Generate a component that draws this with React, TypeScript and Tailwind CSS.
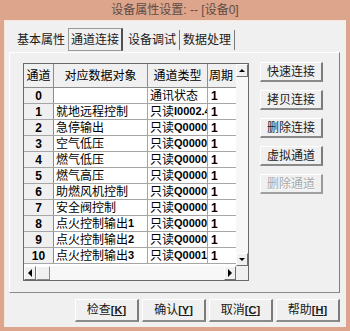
import React from "react";

const rows = [
  { id: "0", name: "", type: "通讯状态" },
  { id: "1", name: "就地远程控制", type: "只读I0002.4" },
  { id: "2", name: "急停输出", type: "只读Q0000" },
  { id: "3", name: "空气低压", type: "只读Q0000" },
  { id: "4", name: "燃气低压", type: "只读Q0000" },
  { id: "5", name: "燃气高压", type: "只读Q0000" },
  { id: "6", name: "助燃风机控制", type: "只读Q0000" },
  { id: "7", name: "安全阀控制", type: "只读Q0000" },
  { id: "8", name: "点火控制输出1", type: "只读Q0000" },
  { id: "9", name: "点火控制输出2", type: "只读Q0000" },
  { id: "10", name: "点火控制输出3", type: "只读Q0001" },
];

const sideButtons = ["快速连接", "拷贝连接", "删除连接", "虚拟通道"];

// latin runs look bold in the old bitmap font
function Mixed({ text }: { text: string }) {
  const parts = text.split(/([\x00-\x7f]+)/).filter(Boolean);
  return (
    <>
      {parts.map((p, i) =>
        /^[\x00-\x7f]+$/.test(p) ? (
          <span key={i} className="font-bold text-[11px]">{p}</span>
        ) : (
          <span key={i}>{p}</span>
        )
      )}
    </>
  );
}

function Arrow({ dir }: { dir: "up" | "down" | "left" | "right" }) {
  const pts = {
    up: "1,4 4,1 7,4",
    down: "1,1 4,4 7,1",
    left: "4,0 0,4 4,8",
    right: "0,0 4,4 0,8",
  }[dir];
  const size = dir === "up" || dir === "down" ? { w: 8, h: 5 } : { w: 5, h: 8 };
  return (
    <svg width={size.w} height={size.h} viewBox={`0 0 ${size.w} ${size.h}`}>
      <polygon points={pts} fill="#000" />
    </svg>
  );
}

function ScrollBtn({ dir, className = "" }: { dir: "up" | "down" | "left" | "right"; className?: string }) {
  return (
    <div
      className={`flex items-center justify-center bg-[#f0f0f0] border-t border-l border-t-white border-l-white border-r border-b border-r-[#6f6f6f] border-b-[#6f6f6f] ${className}`}
    >
      <Arrow dir={dir} />
    </div>
  );
}

function BottomButton({ label, hot }: { label: string; hot: string }) {
  return (
    <button className="w-[64px] h-[23px] bg-[#f0f0f0] border-t border-l border-t-white border-l-white border-r-2 border-b-2 border-r-[#7b7b7b] border-b-[#8a8a8a] text-[12px] text-[#1a1a1a] flex items-center justify-center">
      {label}
      <span className="font-bold text-[11px]">
        [<span className="underline">{hot}</span>]
      </span>
    </button>
  );
}

export default function App() {
  return (
    <div
      className="w-[350px] h-[331px] bg-[#dca58c] flex flex-col overflow-hidden"
      style={{ fontFamily: '"Liberation Sans", "Noto Sans CJK SC", sans-serif' }}
    >
      {/* title bar */}
      <div className="h-[20px] flex items-center justify-center text-[12px] text-[#5e4c45]">
        设备属性设置: -- [设备0]
      </div>

      <div className="flex-1 mx-[4px] mb-[4px] bg-[#f0f0f0] border-t border-l border-[#f8e6de] flex flex-col pl-[4px] pr-[6px] pt-[7px]">
        {/* tabs */}
        <div className="h-[24px] flex items-start text-[12px] text-[#1a1a1a]">
          <div className="w-[59px] h-[23px] pl-[8px] flex items-center">基本属性</div>
          <div className="w-[55px] h-[23px] flex items-center justify-center border border-[#9a9a9a] border-r-2 border-r-[#4f4f4f]">
            通道连接
          </div>
          <div className="w-[56px] h-[23px] pl-[5px] flex items-center">设备调试</div>
          <div className="w-[56px] h-[20px] mt-[2px] flex items-center justify-center border-l border-r border-[#7a7a7a]">
            数据处理
          </div>
        </div>

        {/* tab panel */}
        <div className="h-[241px] border-t border-l border-t-white border-l-white border-r border-b border-r-[#7f7f7f] border-b-[#8a8a8a] flex pl-[13px] pt-[10px]">
          {/* grid */}
          <div className="w-[226px] h-[218px] border border-[#6a6a6a] bg-white flex flex-col text-[12px] text-black">
            <div className="flex flex-1 min-h-0">
              <div className="w-[212px] overflow-hidden">
                <div className="flex h-[24px] bg-[#f0f0f0] border-b border-[#8c8c8c]">
                  <div className="w-[30px] shrink-0 border-r border-[#8c8c8c] flex items-center justify-center">通道</div>
                  <div className="w-[94px] shrink-0 border-r border-[#8c8c8c] flex items-center justify-center">对应数据对象</div>
                  <div className="w-[60px] shrink-0 border-r border-[#8c8c8c] flex items-center justify-center">通道类型</div>
                  <div className="w-[28px] shrink-0 flex items-center pl-[1px] whitespace-nowrap">周期</div>
                </div>
                {rows.map((r) => (
                  <div key={r.id} className="flex h-[16px] border-b border-[#a6a6a6]">
                    <div className="w-[30px] shrink-0 bg-[#f0f0f0] border-r border-[#8c8c8c] flex items-center justify-center font-bold">
                      {r.id}
                    </div>
                    <div className="w-[94px] shrink-0 border-r border-[#a6a6a6] flex items-center pl-[2px] whitespace-nowrap overflow-hidden">
                      <Mixed text={r.name} />
                    </div>
                    <div className="w-[60px] shrink-0 border-r border-[#a6a6a6] flex items-center pl-[2px] whitespace-nowrap overflow-hidden">
                      <Mixed text={r.type} />
                    </div>
                    <div className="w-[28px] shrink-0 flex items-center pl-[3px] font-bold">1</div>
                  </div>
                ))}
              </div>
              {/* vertical scrollbar */}
              <div className="w-[12px] flex flex-col bg-[#f7f7f7]">
                <ScrollBtn dir="up" className="h-[13px]" />
                <div className="flex-1" />
                <ScrollBtn dir="down" className="h-[13px]" />
              </div>
            </div>
            {/* horizontal scrollbar */}
            <div className="h-[14px] flex bg-[#f7f7f7]">
              <ScrollBtn dir="left" className="w-[12px]" />
              <div className="w-[14px] border-t border-l border-t-white border-l-white border-r border-b border-r-[#8a8a8a] border-b-[#8a8a8a] bg-[#f0f0f0]" />
              <div className="flex-1" />
              <ScrollBtn dir="right" className="w-[12px]" />
              <div className="w-[12px] bg-[#f0f0f0]" />
            </div>
          </div>

          {/* side buttons */}
          <div className="ml-[11px] flex flex-col gap-[8px] -mt-[1px]">
            {sideButtons.map((b) => (
              <button
                key={b}
                className="w-[63px] h-[20px] bg-[#f0f0f0] border-t border-l border-t-white border-l-white border-r-2 border-b-2 border-r-[#7b7b7b] border-b-[#8a8a8a] text-[12px] text-[#1a1a1a] flex items-center justify-center"
              >
                {b}
              </button>
            ))}
            <button className="w-[63px] h-[20px] bg-[#f0f0f0] border-t border-l border-t-white border-l-white border-r-2 border-b-2 border-r-[#9a9a9a] border-b-[#a0a0a0] text-[12px] text-[#a8a8a8] [text-shadow:1px_1px_0_#ffffff] flex items-center justify-center">
              删除通道
            </button>
          </div>
        </div>

        {/* dialog buttons */}
        <div className="mt-[6px] flex justify-end gap-[3px]">
          <BottomButton label="检查" hot="K" />
          <BottomButton label="确认" hot="Y" />
          <BottomButton label="取消" hot="C" />
          <BottomButton label="帮助" hot="H" />
        </div>
      </div>
    </div>
  );
}
